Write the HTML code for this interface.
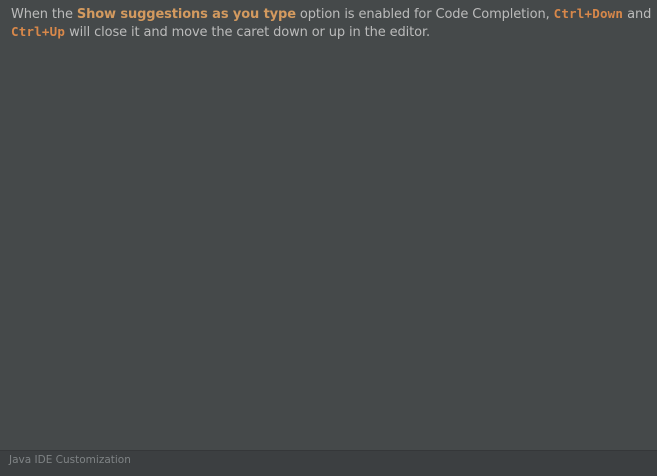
<!DOCTYPE html>
<html><head><style>
html,body{margin:0;padding:0;width:657px;height:475px;overflow:hidden;background:#45494a;}
.t{position:absolute;left:11px;top:5px;font-family:"DejaVu Sans","Liberation Sans",sans-serif;font-size:13px;line-height:17px;color:#bbbbbb;white-space:nowrap;letter-spacing:-0.12px}
.b{color:#d39a5f;font-weight:bold}
.k{color:#d8884a;font-weight:bold;font-family:"DejaVu Sans Mono","Liberation Mono",monospace;font-size:12.5px;letter-spacing:0.2px}
.f{position:absolute;left:0;top:450px;width:657px;height:25px;background:#3c3f41;border-top:1px solid #353739;}
.f span{position:absolute;left:9px;top:3px;font-family:"DejaVu Sans","Liberation Sans",sans-serif;font-size:10.5px;color:#7f8385}
</style></head><body>
<div class="t">When the <span class="b">Show suggestions as you type</span> option is enabled for Code Completion, <span class="k">Ctrl+Down</span> and<br><span class="k">Ctrl+Up</span> will close it and move the caret down or up in the editor.</div>
<div class="f"><span>Java IDE Customization</span></div>
</body></html>
